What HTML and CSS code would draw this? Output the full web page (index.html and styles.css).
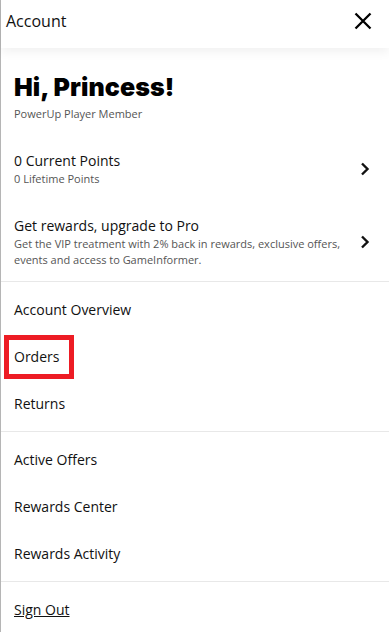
FILE: index.html
```html
<!DOCTYPE html>
<html lang="en">

<head>
    <meta charset="UTF-8">
    <meta name="viewport" content="width=device-width, initial-scale=1.0">
    <title>Account</title>
    <link rel="stylesheet" href="styles.css">
</head>

<body>
    <aside class="drawer">
        <header class="drawer-head">
            <span class="drawer-title">Account</span>
            <a href="#" class="close" aria-label="Close">
                <svg width="18" height="18" viewBox="0 0 18 18">
                    <path d="M1.5 1.5 L16.5 16.5 M16.5 1.5 L1.5 16.5" stroke="#000" stroke-width="2.3" fill="none" />
                </svg>
            </a>
        </header>

        <section class="greeting">
            <h1>Hi, Princess!</h1>
            <p>PowerUp Player Member</p>
        </section>

        <a href="#" class="promo">
            <div>
                <h3>0 Current Points</h3>
                <p>0 Lifetime Points</p>
            </div>
            <svg class="chev" width="10" height="14" viewBox="0 0 10 14">
                <path d="M2 1.5 L7.5 7 L2 12.5" stroke="#111" stroke-width="2.4" fill="none" />
            </svg>
        </a>

        <a href="#" class="promo">
            <div>
                <h3>Get rewards, upgrade to Pro</h3>
                <p>Get the VIP treatment with 2% back in rewards, exclusive offers, events and access to GameInformer.</p>
            </div>
            <svg class="chev" width="10" height="14" viewBox="0 0 10 14">
                <path d="M2 1.5 L7.5 7 L2 12.5" stroke="#111" stroke-width="2.4" fill="none" />
            </svg>
        </a>

        <nav class="links">
            <ul>
                <li><a href="#">Account Overview</a></li>
                <li><a href="#" class="marked">Orders</a></li>
                <li><a href="#">Returns</a></li>
            </ul>
            <ul>
                <li><a href="#">Active Offers</a></li>
                <li><a href="#">Rewards Center</a></li>
                <li><a href="#">Rewards Activity</a></li>
            </ul>
            <ul>
                <li><a href="#" class="signout">Sign Out</a></li>
            </ul>
        </nav>
    </aside>
</body>

</html>
```

FILE: styles.css
```css
html,
body {
    margin: 0;
    padding: 0;
    width: 100%;
    height: 100%;
}

body {
    overflow: hidden;
    background: #fff;
    font-family: 'Open Sans', 'Liberation Sans', sans-serif;
    color: #111;
}

.drawer {
    height: 100%;
    border-left: 1px solid #b5b5b5;
    box-sizing: border-box;
}

.drawer-head {
    display: flex;
    align-items: center;
    justify-content: space-between;
    height: 48px;
    padding: 0 17px 6px 5px;
    box-sizing: border-box;
    box-shadow: 0 4px 10px rgba(0, 0, 0, 0.06);
}

.drawer-title {
    font-size: 16px;
    color: #111;
}

.close {
    display: flex;
}

.greeting {
    padding: 24px 13px 0;
}

.greeting h1 {
    margin: 0;
    font-family: 'Inter', 'DejaVu Sans', sans-serif;
    font-weight: 900;
    font-size: 25px;
    line-height: 30px;
    letter-spacing: 0.1px;
    color: #000;
}

.greeting p {
    margin: 4px 0 0;
    font-size: 11px;
    color: #555;
}

.promo {
    display: flex;
    align-items: center;
    justify-content: space-between;
    gap: 18px;
    padding: 0 19px 0 13px;
    color: inherit;
    text-decoration: none;
}

.greeting+.promo {
    margin-top: 30px;
}

.promo+.promo {
    margin-top: 29px;
}

.promo h3 {
    margin: 0;
    font-size: 14px;
    font-weight: 400;
    line-height: 20px;
}

.promo p {
    margin: 0;
    font-size: 11px;
    line-height: 16px;
    color: #555;
}

.chev {
    flex: none;
}

.links {
    margin-top: 13px;
}

.links ul {
    margin: 0;
    padding: 4px 0;
    list-style: none;
    border-top: 1px solid #e8e8e8;
}

.links li {
    height: 47px;
    display: flex;
    align-items: center;
    padding: 0 13px;
}

.links a {
    font-size: 14px;
    line-height: 20px;
    color: #111;
    text-decoration: none;
}

.links .marked {
    margin-left: -10px;
    padding: 7px 10px 7px 5px;
    border: 5px solid #ed1c24;
}

.links .signout {
    text-decoration: underline;
}
```
